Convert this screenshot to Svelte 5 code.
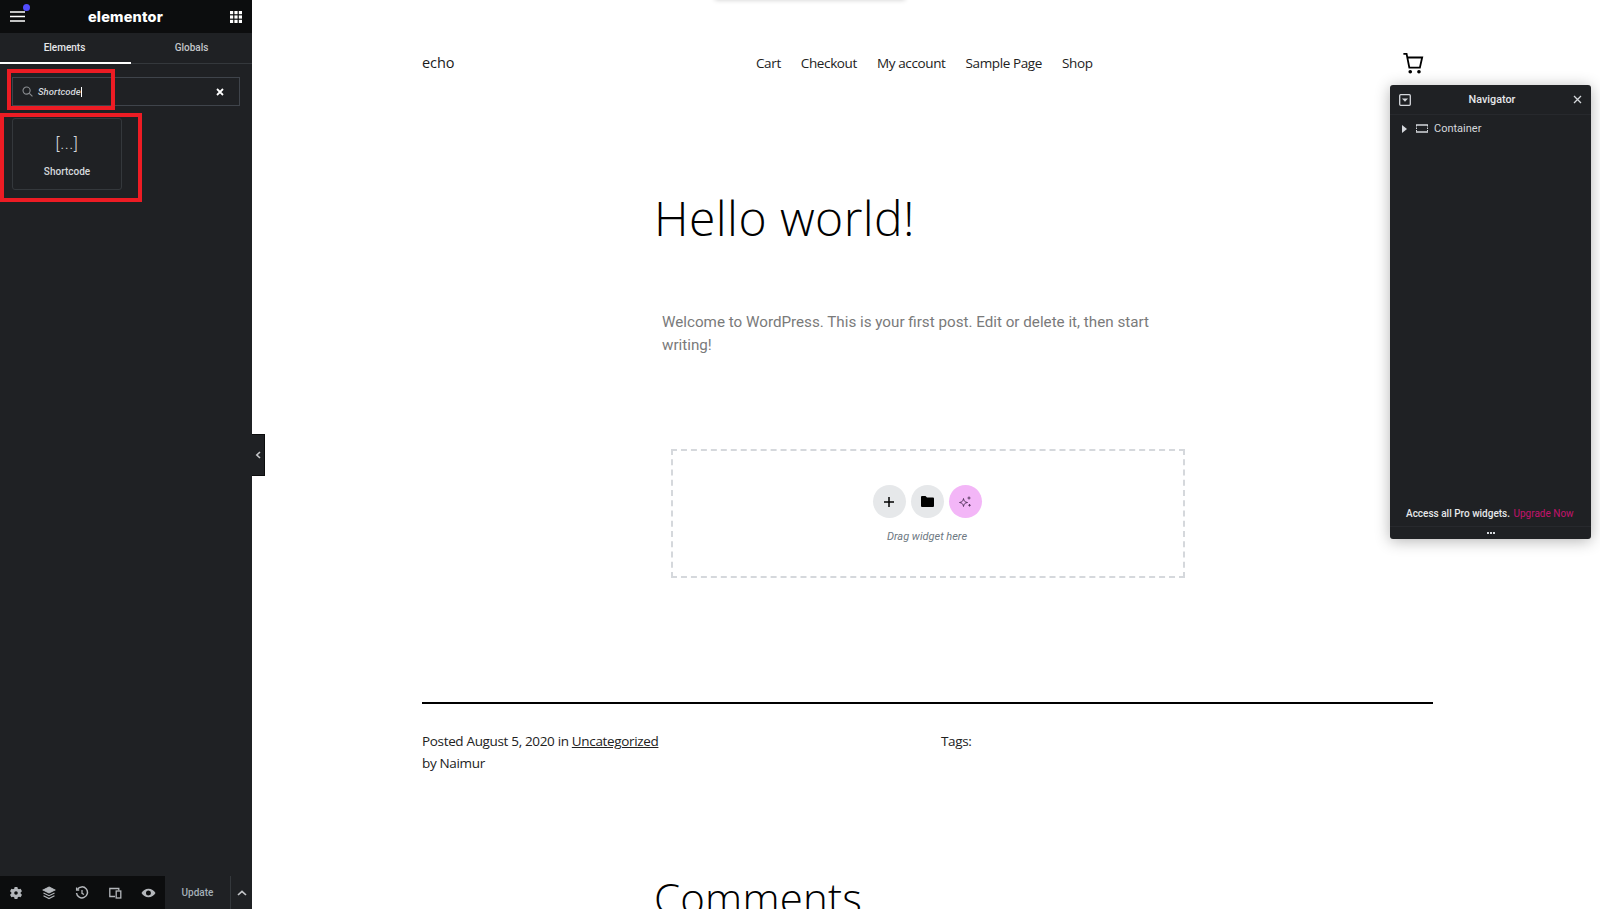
<script>
  const menu = ['Cart', 'Checkout', 'My account', 'Sample Page', 'Shop'];
</script>

<div class="page">
  <aside class="panel">
    <header class="topbar">
      <button class="icon-btn burger" aria-label="Menu">
        <svg width="15" height="11" viewBox="0 0 15 11"><path d="M0 1h15M0 5.500h15M0 10h15" stroke="#fff" stroke-width="1.600" /></svg>
        <span class="dot"></span>
      </button>
      <span class="logo">elementor</span>
      <button class="icon-btn" aria-label="Apps">
        <svg width="12" height="12" viewBox="0 0 12 12" fill="#fff">
          {#each [0, 4.4, 8.8] as y}
            {#each [0, 4.4, 8.8] as x}
              <rect {x} {y} width="3.2" height="3.2" />
            {/each}
          {/each}
        </svg>
      </button>
    </header>

    <nav class="tabs">
      <span class="tab active">Elements</span>
      <span class="tab">Globals</span>
    </nav>

    <div class="search">
      <svg width="11" height="11" viewBox="0 0 12 12" fill="none" stroke="#8b8e92" stroke-width="1.2"><circle cx="5" cy="5" r="3.9" /><path d="M8 8l3.4 3.4" /></svg>
      <span class="query">Shortcode<i class="caret"></i></span>
      <svg class="clear" width="8" height="8" viewBox="0 0 8 8"><path d="M1 1l6 6M7 1L1 7" stroke="#fff" stroke-width="1.8" /></svg>
    </div>

    <div class="widgets">
      <div class="widget">
        <span class="glyph">[...]</span>
        <span class="widget-name">Shortcode</span>
      </div>
    </div>

    <footer class="tools">
      <div class="tool-icons">
        <svg width="14" height="14" viewBox="0 0 14 14"><path fill="#b4b7bb" fill-rule="evenodd" d="M5.6 1h2.8l.4 1.7 1.2.6 1.6-.6 1.4 2.5-1.3 1.1v1.4l1.3 1.1-1.4 2.5-1.6-.6-1.2.6L8.4 13H5.6l-.4-1.7-1.2-.6-1.6.6L1 8.800l1.300-1.100V6.300L1 5.200l1.400-2.500 1.600.6 1.200-.6zM7 5.200a1.800 1.800 0 100 3.600 1.800 1.800 0 000-3.600z" /></svg>
        <svg width="14" height="14" viewBox="0 0 14 14" fill="none" stroke="#b4b7bb" stroke-width="1.1"><path fill="#b4b7bb" d="M7 1l6 3-6 3-6-3z" /><path d="M1.500 7L7 9.700 12.500 7M1.500 9.800L7 12.600l5.500-2.800" /></svg>
        <svg width="14" height="14" viewBox="0 0 14 14" fill="none" stroke="#b4b7bb" stroke-width="1.500"><path d="M2.400 3.300A5.500 5.500 0 111.500 7" /><path d="M1.600 1.400v2.600h2.600M7 4v3.300l2 1.200" stroke-width="1.300" /></svg>
        <svg width="14" height="14" viewBox="0 0 14 14" fill="none" stroke="#b4b7bb" stroke-width="1.300"><path d="M7 10.500H1.800V2.500h9v2" /><rect x="8.200" y="5" width="4.600" height="7" /></svg>
        <svg width="15" height="14" viewBox="0 0 15 14"><path fill="#b4b7bb" fill-rule="evenodd" d="M7.500 2.800c3 0 5.500 1.800 7 4.200-1.500 2.400-4 4.200-7 4.200S2 9.400.5 7c1.500-2.400 4-4.200 7-4.200zM7.500 4.500a2.500 2.500 0 100 5 2.500 2.500 0 000-5z" /></svg>
      </div>
      <button class="update">Update</button>
      <button class="more" aria-label="More">
        <svg width="10" height="6" viewBox="0 0 10 6" fill="none"><path d="M1 5l4-3.700L9 5" stroke="#c4c6c9" stroke-width="1.700" /></svg>
      </button>
    </footer>

    <span class="collapse">
      <svg width="6" height="8" viewBox="0 0 6 8" fill="none"><path d="M5 1L1.800 4 5 7" stroke="#c4c6c9" stroke-width="1.600" /></svg>
    </span>
  </aside>

  <main class="site">
    <span class="top-shadow"></span>
    <header class="site-head">
      <span class="brand">echo</span>
      <ul class="menu">
        {#each menu as item}
          <li>{item}</li>
        {/each}
      </ul>
      <svg class="cart" width="22" height="22" viewBox="0 0 24 24" fill="none" stroke="#000" stroke-width="2"><path d="M1.500 2h3.500l3 15h11.500l2.500-11H6" /><circle cx="9" cy="21.500" r="1" fill="#000" /><circle cx="18.500" cy="21.500" r="1" fill="#000" /></svg>
    </header>

    <article class="post">
      <h1>Hello world!</h1>
      <div class="body-text">
        <p>Welcome to WordPress. This is your first post. Edit or delete it, then start writing!</p>
      </div>

      <div class="dropzone">
        <div class="drop-actions">
          <span class="round">
            <svg width="12" height="12" viewBox="0 0 12 12"><path d="M6 1v10M1 6h10" stroke="#000" stroke-width="1.500" /></svg>
          </span>
          <span class="round">
            <svg width="13" height="11" viewBox="0 0 13 11"><path d="M0 1a1 1 0 011-1h3.500l1.500 1.500h6a1 1 0 011 1V10a1 1 0 01-1 1H1a1 1 0 01-1-1z" /></svg>
          </span>
          <span class="round ai">
            <svg width="14" height="14" viewBox="0 0 14 14" fill="none" stroke="#5a3a63" stroke-width="1"><path d="M5.500 3.500c.4 2.600 1.400 3.600 4 4-2.600.4-3.600 1.400-4 4-.4-2.600-1.400-3.600-4-4 2.600-.4 3.600-1.400 4-4z" /><path d="M11 1.500v3M9.500 3h3M11.500 9v2.500M10.300 10.300h2.500" /></svg>
          </span>
        </div>
        <span class="drop-hint">Drag widget here</span>
      </div>

      <div class="meta">
        <div class="meta-left">
          <div>Posted August 5, 2020 in <u>Uncategorized</u></div>
          <div>by Naimur</div>
        </div>
        <div class="meta-right">Tags:</div>
      </div>

      <h2>Comments</h2>
    </article>
  </main>

  <section class="navigator">
    <header class="nav-head">
      <svg width="12" height="12" viewBox="0 0 12 12" fill="none"><rect x=".7" y=".7" width="10.600" height="10.600" rx="1" stroke="#d5d8dc" stroke-width="1.300" /><path d="M3 4.500h6L6 7.800z" fill="#d5d8dc" /></svg>
      <span class="nav-title">Navigator</span>
      <svg width="9" height="9" viewBox="0 0 9 9"><path d="M1 1l7 7M8 1L1 8" stroke="#d5d8dc" stroke-width="1.300" /></svg>
    </header>
    <div class="nav-row">
      <svg width="5" height="8" viewBox="0 0 5 8"><path d="M0 0l5 4-5 4z" fill="#d5d8dc" /></svg>
      <svg class="box" width="12" height="9" viewBox="0 0 12 9" fill="none"><path d="M0 1h12M0 8h12" stroke="#d5d8dc" stroke-width="1.600" /><path d="M.5 1v7M11.500 1v7" stroke="#d5d8dc" stroke-width="1" stroke-dasharray="1.500 1" /></svg>
      <span>Container</span>
    </div>
    <div class="nav-promo">Access all Pro widgets. <span class="upgrade">Upgrade Now</span></div>
    <div class="nav-foot"><i></i><i></i><i></i></div>
  </section>

  <span class="mark mark-search"></span>
  <span class="mark mark-widget"></span>
</div>

<style>
  :global(body) {
    margin: 0;
    background: #fff;
  }

  .page {
    position: relative;
    display: grid;
    grid-template-columns: 252px 1fr;
    height: 909px;
    overflow: hidden;
    font-family: Roboto, "Liberation Sans", sans-serif;
  }

  button {
    background: none;
    border: none;
    padding: 0;
    font: inherit;
    color: inherit;
    display: flex;
    align-items: center;
  }

  /* left panel */
  .panel {
    position: relative;
    display: flex;
    flex-direction: column;
    background: #1f2124;
    color: #d5d8dc;
    height: 909px;
  }

  .topbar {
    display: flex;
    align-items: center;
    justify-content: space-between;
    height: 33px;
    padding: 0 10px;
    background: #0c0d0e;
  }

  .burger {
    position: relative;
  }

  .dot {
    position: absolute;
    top: -7px;
    right: -5px;
    width: 7px;
    height: 7px;
    border-radius: 50%;
    background: #524cff;
  }

  .logo {
    color: #fff;
    font-family: Inter, sans-serif;
    font-weight: 800;
    font-size: 14.500px;
    letter-spacing: 0.2px;
    margin-right: 4px;
  }

  .tabs {
    display: flex;
    height: 30px;
    border-bottom: 1px solid #34383c;
  }

  .tab {
    display: flex;
    align-items: center;
    justify-content: center;
    box-sizing: border-box;
    flex: 1;
    font-size: 10px;
    font-weight: 500;
    color: #c4c6c9;
    padding-bottom: 2px;
  }

  .tab.active {
    flex: 0 0 131px;
    color: #e6e8ea;
    margin-bottom: -1px;
    border-bottom: 2px solid #fff;
    padding: 0 2px 0 0;
  }

  .search {
    display: flex;
    align-items: center;
    gap: 5px;
    box-sizing: border-box;
    margin: 13px 12px 0;
    height: 29px;
    padding: 0 15px 0 9px;
    border: 1px solid #3f444b;
  }

  .query {
    flex: 1;
    font-size: 9.500px;
    font-style: italic;
    font-weight: 500;
    color: #d5d8dc;
  }

  .caret {
    display: inline-block;
    width: 1px;
    height: 10px;
    background: #fff;
    vertical-align: -2px;
  }

  .widgets {
    padding: 12px 12px;
  }

  .widget {
    display: flex;
    flex-direction: column;
    align-items: center;
    box-sizing: border-box;
    width: 110px;
    height: 72px;
    padding-top: 13px;
    border: 1px solid #34383c;
    border-radius: 3px;
  }

  .glyph {
    font-size: 17px;
    font-weight: 300;
    line-height: 22px;
    color: #d5d8dc;
    letter-spacing: 0.5px;
  }

  .widget-name {
    margin-top: 12px;
    font-size: 10px;
    font-weight: 500;
    color: #d5d8dc;
  }

  .tools {
    display: flex;
    align-items: center;
    height: 33px;
    margin-top: auto;
  }

  .tool-icons {
    display: flex;
    align-items: center;
    justify-content: space-between;
    box-sizing: border-box;
    width: 165px;
    height: 100%;
    padding: 0 9px;
    background: #0c0d0e;
  }

  .update {
    flex: 1;
    justify-content: center;
    height: 100%;
    font-size: 10px;
    font-weight: 500;
    color: #a4afb7;
  }

  .more {
    justify-content: center;
    width: 22px;
    height: 100%;
    border-left: 1px solid #34383c;
  }

  .collapse {
    position: absolute;
    top: 434px;
    right: -13px;
    display: flex;
    align-items: center;
    justify-content: center;
    width: 13px;
    height: 42px;
    background: #1f2124;
    border-top: 1px solid #0c0d0e;
    border-bottom: 1px solid #0c0d0e;
    border-right: 1px solid #0c0d0e;
    box-sizing: border-box;
  }

  /* site preview */
  .site {
    position: relative;
    padding-left: 170px;
    color: #000;
    font-family: "Open Sans", sans-serif;
  }

  .top-shadow {
    position: absolute;
    top: -6px;
    left: 463px;
    width: 190px;
    height: 6px;
    box-shadow: 0 0 5px rgba(0, 0, 0, 0.2);
  }

  .site-head {
    display: flex;
    align-items: center;
    width: 1011px;
    height: 125px;
  }

  .brand {
    width: 334px;
    font-size: 14.500px;
    letter-spacing: -0.1px;
    color: #1a1a1a;
  }

  .menu {
    display: flex;
    gap: 20px;
    flex: 1;
    margin: 0;
    padding: 0;
    list-style: none;
    font-size: 13.500px;
    letter-spacing: -0.38px;
    color: #222;
  }

  .cart {
    margin-right: 9px;
  }

  .post {
    width: 1011px;
  }

  h1 {
    margin: 62px 0 0 232px;
    font-size: 48px;
    font-weight: 300;
    line-height: 62px;
    letter-spacing: 0.45px;
  }

  .body-text {
    margin: 62px 0 0 240px;
    width: 500px;
    font-family: Roboto, sans-serif;
    font-size: 15.200px;
    line-height: 23px;
    color: #7a7a7a;
  }

  .body-text p {
    margin: 0;
  }

  .dropzone {
    display: flex;
    flex-direction: column;
    align-items: center;
    box-sizing: border-box;
    width: 514px;
    height: 129px;
    margin: 92px 0 0 249px;
    padding: 34px 2px 0 0;
    border: 2px dashed #d5d8dc;
  }

  .drop-actions {
    display: flex;
    gap: 5px;
  }

  .round {
    display: flex;
    align-items: center;
    justify-content: center;
    width: 33px;
    height: 33px;
    border-radius: 50%;
    background: #e6e8ea;
  }

  .round.ai {
    background: #f3b6f7;
  }

  .drop-hint {
    margin-top: 12px;
    font-family: Roboto, sans-serif;
    font-size: 11px;
    font-style: italic;
    color: #6d7882;
  }

  .meta {
    display: flex;
    margin-top: 124px;
    padding-top: 27px;
    border-top: 2px solid #000;
    font-size: 13.500px;
    line-height: 21.500px;
    letter-spacing: -0.34px;
    color: #222;
  }

  .meta-left {
    width: 519px;
  }

  h2 {
    margin: 98px 0 0 232px;
    font-size: 42px;
    font-weight: 300;
    line-height: 52px;
    letter-spacing: 0.2px;
  }

  /* floating navigator */
  .navigator {
    position: absolute;
    top: 85px;
    left: 1390px;
    display: flex;
    flex-direction: column;
    width: 201px;
    height: 454px;
    background: #1f2124;
    border-radius: 3px;
    color: #d5d8dc;
    box-shadow: 0 2px 15px rgba(0, 0, 0, 0.3);
  }

  .nav-head {
    display: flex;
    align-items: center;
    justify-content: space-between;
    height: 29px;
    padding: 0 9px 0 9px;
    border-bottom: 1px solid #27292d;
  }

  .nav-title {
    font-size: 10.800px;
    font-weight: 500;
    color: #e6e8ea;
  }

  .nav-row {
    display: flex;
    align-items: center;
    height: 27px;
    padding-left: 12px;
    font-size: 11px;
  }

  .box {
    margin: 0 6px 0 9px;
  }

  .nav-promo {
    margin-top: auto;
    padding: 0 0 7px 16px;
    font-size: 10px;
    font-weight: 500;
    color: #e6e8ea;
  }

  .upgrade {
    margin-left: 1px;
    font-weight: 400;
    color: #c2136d;
  }

  .nav-foot {
    display: flex;
    align-items: center;
    justify-content: center;
    gap: 1px;
    height: 12px;
    border-top: 1px solid #27292d;
  }

  .nav-foot i {
    width: 2px;
    height: 2px;
    background: #d5d8dc;
  }

  /* red annotation boxes on top of the screenshot */
  .mark {
    position: absolute;
    box-sizing: border-box;
    border: 4px solid #ed1c24;
  }

  .mark-search {
    top: 69px;
    left: 7px;
    width: 108px;
    height: 41px;
  }

  .mark-widget {
    top: 113px;
    left: 0;
    width: 142px;
    height: 89px;
  }
</style>
